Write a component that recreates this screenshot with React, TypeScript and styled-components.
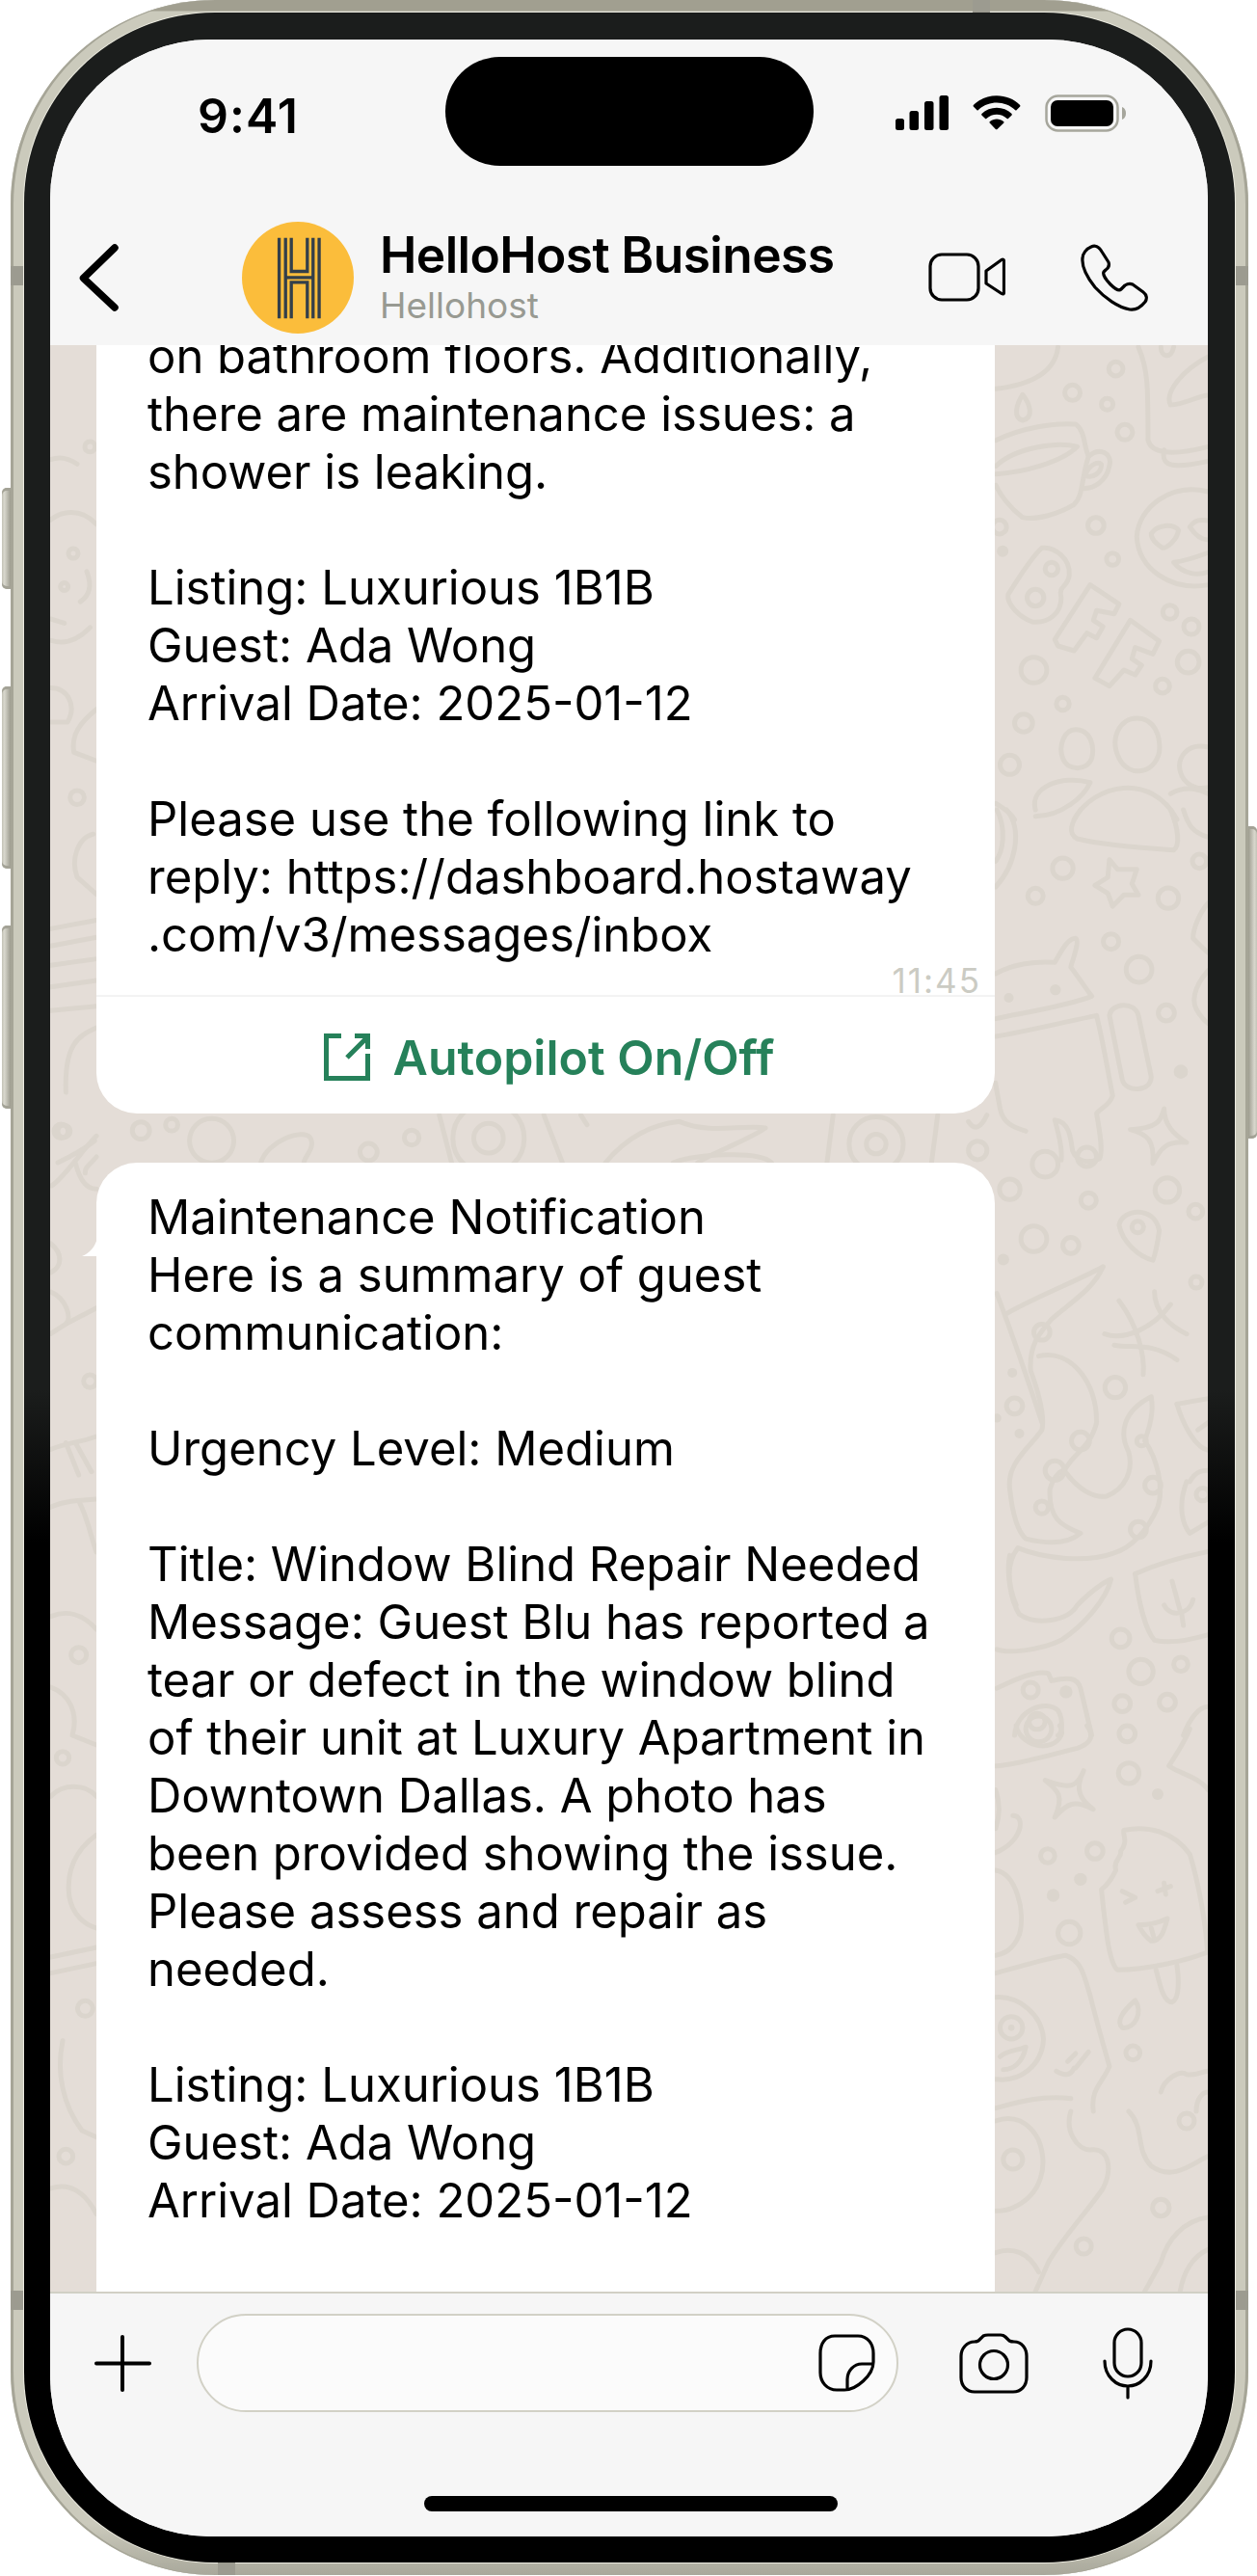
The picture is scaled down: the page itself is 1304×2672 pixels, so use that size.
import React from "react";
import styled, { createGlobalStyle } from "styled-components";

const Global = createGlobalStyle`
  html, body { margin: 0; padding: 0; background: #fff; }
  body { font-family: Inter, "Liberation Sans", sans-serif; }
`;

const Page = styled.div`
  width: 1304px;
  height: 2672px;
  padding-left: 11px;
  box-sizing: border-box;
  overflow: hidden;
`;

const Frame = styled.div`
  position: relative;
  width: 1284px;
  height: 2671px;
  box-sizing: border-box;
  padding: 13px 14px;
  border-radius: 212px;
  background: linear-gradient(#a19f90 0, #a19f90 11px, #cbcabc 12px, #cbcabc 98%, #a9a89b 100%);
  box-shadow: inset 3px 0 0 #a6a597, inset -3px 0 0 #a6a597;
`;

const SideButton = styled.div<{ $top: number; $height: number; $right?: boolean }>`
  position: absolute;
  top: ${(p) => p.$top}px;
  height: ${(p) => p.$height}px;
  width: 9px;
  ${(p) => (p.$right ? "right: -9px;" : "left: -9px;")}
  border-radius: ${(p) => (p.$right ? "0 5px 5px 0" : "5px 0 0 5px")};
  background: ${(p) =>
    p.$right
      ? "linear-gradient(90deg, #9d9c8f, #d8d7cd 70%, #c4c3b7)"
      : "linear-gradient(90deg, #c4c3b7, #d8d7cd 30%, #9d9c8f)"};
  box-shadow: inset 0 3px 0 #a3a296, inset 0 -3px 0 #a3a296;
`;

const AntennaBand = styled.div<{ $side: "left" | "right" | "top" | "bottom"; $at: number }>`
  position: absolute;
  background: #9c9b90;
  ${(p) =>
    p.$side === "left" || p.$side === "right"
      ? `top: ${p.$at}px; height: 20px; width: 13px; ${p.$side}: 0;`
      : `left: ${p.$at}px; width: 18px; height: 13px; ${p.$side}: 0;`}
`;

const Bezel = styled.div`
  height: 100%;
  box-sizing: border-box;
  padding: 28px 28px 27px 27px;
  border-radius: 198px;
  background: linear-gradient(#1b1d1c 0, #1b1d1c 54%, #000 60%);
  box-shadow: 0 0 0 1px #ecebe1;
`;

const Screen = styled.div`
  position: relative;
  height: 100%;
  display: flex;
  flex-direction: column;
  overflow: hidden;
  border-radius: 166px;
  background: #f6f6f6;
`;

const Island = styled.div`
  position: absolute;
  top: 18px;
  left: 410px;
  width: 382px;
  height: 113px;
  border-radius: 57px;
  background: #000;
`;

const Header = styled.header`
  height: 317px;
  flex: none;
  box-sizing: border-box;
  background: #f6f6f6;
`;

const StatusBar = styled.div`
  display: flex;
  align-items: center;
  justify-content: space-between;
  height: 40px;
  margin-top: 56px;
  padding: 0 85px 0 153px;
`;

const Time = styled.span`
  font-size: 50px;
  font-weight: 600;
  line-height: 40px;
  letter-spacing: 1px;
  color: #000;
  position: relative;
  top: 3px;
`;

const StatusIcons = styled.div`
  display: flex;
  align-items: center;
  gap: 24px;
`;

const NavRow = styled.div`
  display: flex;
  align-items: center;
  height: 116px;
  margin-top: 93px;
  padding-left: 30px;
`;

const Avatar = styled.div`
  width: 116px;
  height: 116px;
  margin-left: 127px;
  flex: none;
  border-radius: 50%;
  background: #fbbd3b;
  display: flex;
  align-items: center;
  justify-content: center;
`;

const TitleBlock = styled.div`
  width: 569px;
  margin-left: 27px;
  margin-top: -2px;
  flex: none;
`;

const Title = styled.div`
  font-size: 51.5px;
  line-height: 60px;
  font-weight: 600;
  color: #000;
  letter-spacing: -0.6px;
  white-space: nowrap;
`;

const Subtitle = styled.div`
  font-size: 37px;
  line-height: 46px;
  color: #989a92;
  white-space: nowrap;
`;

const NavActions = styled.div`
  display: flex;
  align-items: center;
  gap: 77px;
`;

const Chat = styled.main`
  position: relative;
  flex: 1;
  min-height: 0;
  overflow: hidden;
  background: #e4ddd7;
`;

const Wallpaper = styled.svg`
  position: absolute;
  inset: 0;
  width: 100%;
  height: 100%;
  filter: blur(0.7px);
`;

const Thread = styled.div`
  position: relative;
  display: flex;
  flex-direction: column;
  gap: 51px;
  width: 932px;
  margin: -60px 0 0 48px;
`;

const Bubble = styled.article<{ $top: number; $bottom?: number }>`
  position: relative;
  background: #fff;
  border-radius: 42px;
  padding-top: ${(p) => p.$top}px;
  padding-bottom: ${(p) => p.$bottom ?? 0}px;
`;

const Tail = styled.svg`
  position: absolute;
  left: -15px;
  top: 78px;
`;

const MessageText = styled.div`
  padding: 0 40px 0 53px;
  font-size: 49px;
  line-height: 60px;
  color: #000;
  white-space: pre-line;
`;

const Stamp = styled.div`
  height: 32px;
  padding-right: 14px;
  text-align: right;
  font-size: 35px;
  line-height: 34px;
  letter-spacing: 2px;
  color: #cbcbc3;
`;

const ActionButton = styled.div`
  height: 123px;
  border-top: 2px solid #f3f3f3;
  display: flex;
  align-items: center;
  justify-content: center;
  gap: 24px;
  padding: 4px 0 0 7px;
  box-sizing: border-box;
  color: #26815a;
  font-size: 50px;
  font-weight: 600;
`;

const Composer = styled.footer`
  height: 254px;
  flex: none;
  box-sizing: border-box;
  border-top: 2px solid #d1d0c5;
  background: #f6f6f6;
  display: flex;
  flex-direction: column;
  padding-top: 21px;
`;

const ComposerRow = styled.div`
  display: flex;
  align-items: center;
  padding-left: 46px;
`;

const InputPill = styled.div`
  width: 728px;
  height: 102px;
  margin-left: 47px;
  margin-right: 63px;
  box-sizing: border-box;
  border: 2px solid #d2d1c6;
  border-radius: 51px;
  background: #fbfbfb;
  display: flex;
  align-items: center;
  justify-content: flex-end;
  padding-right: 22px;
`;

const MicSlot = styled.div`
  margin-left: 77px;
  display: flex;
`;

const HomeBar = styled.div`
  width: 429px;
  height: 16px;
  margin: 87px auto 0 388px;
  border-radius: 8px;
  background: #000;
`;

type Doodle = {
  ox: number;
  oy: number;
  sx: number;
  sy: number;
  paths: string[];
  rings?: [number, number, number][];
  dots?: [number, number, number][];
};

const doodles: Doodle[] = [
  {
    ox: 1000, oy: 350, sx: 1 / 3, sy: 1 / 3,
    paths: [
      "M97 160 C180 150 280 120 290 30",
      "M180 178 C160 210 150 250 180 258 C215 250 205 210 180 178Z",
      "M97 320 C180 280 280 265 345 270 C375 290 370 340 385 370 C360 450 370 490 340 520 C290 550 220 570 180 560 C140 530 110 490 97 460",
      "M97 425 C180 420 300 390 350 340 C290 325 160 340 97 400",
      "M385 370 C420 340 460 360 450 400 C440 450 400 470 370 470",
      "M375 430 C385 395 415 385 425 395 C425 420 400 440 375 430Z",
      "M240 655 C280 650 330 690 325 740 C320 780 290 770 300 810 C300 860 260 890 210 885 C170 870 130 830 135 800 C160 760 210 680 240 655Z",
      "M390 770 L480 830 L465 860 L410 850 L400 880 L430 900 L410 935 L380 920 L340 975 L290 960 L280 940 Z",
      "M515 880 L605 945 L585 985 L530 965 L520 1000 L550 1020 L530 1050 L495 1035 L450 1085 L405 1060 Z",
      "M757 480 C640 450 540 530 535 620 C540 720 640 790 757 770",
      "M580 610 C600 580 650 580 665 600 C660 630 630 655 615 655 C595 640 580 630 580 610Z",
      "M700 590 C720 560 745 570 757 570 M700 590 C720 620 740 630 757 630",
      "M650 700 C690 695 730 680 757 670 M650 700 C680 740 730 740 757 730",
      "M540 30 C570 100 570 150 570 320 C580 360 640 370 757 340",
      "M620 350 C610 400 640 410 757 385",
      "M640 210 C620 170 680 100 757 60 M640 210 C680 210 730 180 757 180",
      "M610 30 C610 60 640 70 650 30",
      "M345 1220 C390 1220 405 1270 395 1310 C380 1350 320 1350 305 1310 C290 1270 310 1220 345 1220Z",
      "M535 1185 C590 1185 610 1240 605 1290 C590 1360 510 1370 480 1310 C450 1250 480 1185 535 1185Z",
      "M757 1275 C690 1260 660 1310 670 1350 C680 1390 720 1410 757 1400",
      "M220 1470 C200 1400 300 1360 390 1385 C370 1430 300 1490 220 1490",
      "M340 1500 C400 1390 580 1350 660 1500",
      "M640 1420 C690 1390 740 1410 757 1420",
      "M97 1450 C130 1470 150 1490 155 1500",
    ],
    rings: [[335,172,24],[443,208,18],[470,98,22],[498,295,24],[408,585,25],[460,690,19],[270,720,20],[220,810,26],[638,855,22],[705,900,24],[695,1010,34],[615,1085,22],[215,1035,40],[305,1140,20],[183,1200,28],[140,1330,30],[108,590,22]],
    dots: [[118,665,18]],
  },
  {
    ox: 1030, oy: 840, sx: 1 / 3, sy: 1 / 3,
    paths: [
      "M40 0 C90 60 70 170 6 240",
      "M6 160 C30 130 40 60 10 0",
      "M270 0 C240 40 230 75 260 90 C340 110 480 120 560 125 C580 110 575 60 550 0",
      "M590 0 C605 50 620 70 667 85",
      "M360 155 L385 185 L445 185 L430 230 L450 265 L405 265 L370 300 L355 260 L315 235 L355 210 Z",
      "M6 510 C60 480 130 470 190 475 C210 440 230 400 255 400 C270 410 240 480 240 490 C270 530 290 560 305 580 C230 610 100 630 6 650",
      "M6 705 C100 690 220 660 320 640 C340 720 360 840 370 890 C360 920 330 930 320 945 C330 1000 340 1060 330 1085 C300 1100 260 1100 245 1060 C240 1020 235 970 190 965 C200 1000 215 1050 210 1090",
      "M100 1000 C70 990 30 980 20 930 C15 900 10 880 6 850",
      "M360 640 C365 600 440 595 450 640 L490 830 C490 880 410 880 400 840 Z",
      "M530 930 C520 960 520 990 425 995 C480 1010 500 1030 495 1100 C520 1050 540 1030 600 1035 C560 1010 530 980 530 930Z",
      "M667 290 C640 320 620 370 620 400 C640 420 660 440 667 445",
      "M667 500 C640 530 610 580 630 620 C640 640 660 660 667 665",
    ],
    rings: [[215,182,32],[130,268,24],[365,410,24],[452,497,40],[537,632,25],[543,275,32],[640,160,22]],
    dots: [[47,585,15],[192,560,17],[582,815,22]],
  },
  {
    ox: 1030, oy: 1790, sx: 1 / 3, sy: 1 / 3,
    paths: [
      "M70 0 C80 60 180 90 210 30 C215 20 210 5 205 0",
      "M290 0 C320 40 290 60 260 70 C180 90 60 125 6 125",
      "M280 140 C260 190 240 200 160 170 C200 200 220 220 190 285 C230 240 250 230 310 260 C270 230 250 200 280 140Z",
      "M610 10 C590 60 560 100 545 125 C580 150 640 160 667 200",
      "M60 280 C100 280 90 360 6 395",
      "M6 200 C20 240 20 280 6 320",
      "M6 450 C70 460 100 580 80 650 C60 700 30 710 6 715",
      "M405 325 C480 310 560 330 610 400 C640 500 660 620 665 705 C600 730 480 760 385 760 C360 740 350 650 335 510 C360 490 370 470 380 450 C370 420 400 410 395 390 C420 360 400 340 405 325Z",
      "M505 760 C520 820 530 860 555 860 C580 850 575 780 570 745",
      "M400 515 L440 535 L410 550",
      "M510 515 L550 500 M530 490 L535 525",
      "M450 620 C490 620 520 610 540 600 C530 640 520 670 490 670 C475 660 460 640 450 620Z",
      "M490 630 L500 665",
      "M6 770 C80 750 180 720 225 715 C270 730 280 770 300 840 C320 920 340 990 360 1060 C340 1110 300 1130 310 1200",
      "M6 845 C80 840 150 900 155 975 C150 1060 80 1110 6 1100",
      "M440 855 C400 890 380 920 400 940 C440 945 465 890 440 855Z",
      "M230 1045 L255 1020 M255 1065 L295 1015",
      "M195 1075 C220 1090 240 1090 250 1065",
      "M20 1030 C40 1010 80 1010 100 1000 C90 1050 60 1070 30 1070",
      "M6 1190 C80 1170 150 1150 240 1160",
      "M520 1140 C530 1100 580 1070 600 1085 C630 1090 650 1075 667 1075",
      "M630 1200 C630 1160 650 1140 667 1140",
    ],
    rings: [[140,10,40],[415,25,25],[420,148,32],[168,405,22],[315,390,25],[235,645,35],[433,1018,22],[55,940,35]],
    dots: [[510,213,18],[270,478,20],[185,528,20],[55,940,10]],
  },
  {
    ox: 1000, oy: 1200, sx: 1 / 3, sy: 1 / 2.613,
    paths: [
      "M480 185 C490 140 590 130 605 200 C600 230 590 270 585 280 C540 270 490 230 480 185Z",
      "M480 390 C540 460 560 540 555 590",
      "M590 365 C590 420 640 460 690 480",
      "M435 480 C500 500 590 460 640 400",
      "M465 510 C520 520 580 500 660 550",
      "M430 298 C340 340 220 380 130 425",
      "M430 298 C400 360 320 400 270 440 C230 480 200 510 205 580 C230 640 250 700 240 740 C200 790 130 830 140 900 C150 980 170 1020 190 1035 C260 1050 320 1050 360 1020 C300 1000 260 980 265 900 C280 860 300 850 310 850 C350 900 400 925 440 920 C500 900 525 850 510 800 C480 750 490 690 580 650 C590 700 570 740 560 770 C600 820 620 900 600 950 C570 1010 520 1060 460 1075 C380 1100 250 1090 165 1060 C130 1100 130 1150 160 1215",
      "M100 370 C130 440 180 560 240 720",
      "M230 540 C330 520 410 610 410 720 C390 790 340 800 310 850",
      "M140 1080 C130 1120 140 1200 170 1240 C220 1270 320 1260 350 1215 C400 1170 440 1150 455 1145 C440 1200 370 1270 300 1310 C230 1340 130 1345 100 1335",
      "M530 1130 C620 1095 700 1080 757 1070",
      "M530 1130 C540 1200 560 1280 590 1310 C640 1320 700 1310 757 1295",
      "M645 1150 L670 1230",
      "M620 1215 C640 1250 700 1240 710 1200",
      "M675 1240 L680 1270",
      "M660 670 L757 655",
      "M660 670 C680 730 720 790 757 795",
      "M725 740 L757 720",
      "M690 880 C660 950 680 1000 700 1020 L757 990",
      "M700 880 C720 850 740 850 757 850",
      "M100 1440 C150 1420 220 1390 260 1400 L270 1420 C320 1410 350 1410 360 1440 L395 1568",
      "M155 1568 C160 1500 250 1470 290 1500 C310 1530 300 1568 290 1568",
      "M680 1568 C700 1520 730 1490 757 1490",
    ],
    rings: [[140,88,32],[630,90,38],[385,118,24],[718,148,22],[215,222,40],[330,240,25],[720,340,18],[468,625,32],[155,675,25],[485,1305,28],[548,1395,38],[672,1375,22],[490,1482,25],[630,1478,25],[250,20,40],[380,0,30],[240,475,25],[360,770,28],[280,850,30],[240,950,20],[540,1010,25],[585,890,25],[550,770,15],[538,190,18],[740,915,20],[205,1445,24],[225,1530,25]],
    dots: [[120,278,18],[148,585,15],[170,750,15],[100,708,14],[315,1450,20]],
  },
  {
    ox: 1030, oy: 2190, sx: 1 / 3, sy: 1 / 3,
    paths: [
      "M6 30 C60 10 110 30 140 90 C170 170 150 260 60 300 C40 310 20 310 6 310",
      "M240 0 C220 60 260 120 300 120 C360 110 370 180 340 240 C300 300 210 400 170 470 L130 560",
      "M420 0 C470 50 440 120 490 170 C560 220 620 160 667 140",
      "M667 330 C590 340 540 400 520 470 L470 560",
      "M667 430 C620 450 590 500 580 560",
      "M6 440 C60 420 110 440 140 500",
    ],
    rings: [[60,150,30],[520,300,26],[600,30,24],[280,420,24]],
  },
  {
    ox: 0, oy: 450, sx: 1 / 3, sy: 1 / 2.24,
    paths: [
      "M157 200 C190 180 250 170 300 210",
      "M160 480 C200 490 240 480 280 450",
      "M157 430 L200 440",
      "M250 390 C290 370 280 340 270 320",
      "M157 590 C210 590 240 630 210 670 L157 670",
      "M300 640 C250 670 220 700 230 740 L300 760",
      "M290 930 C240 940 220 990 240 1030 L300 1070",
      "M157 1150 L300 1130", "M157 1190 L300 1170", "M157 1235 L300 1220", "M157 1285 L300 1270", "M157 1340 L300 1330",
      "M300 1380 C240 1400 200 1420 205 1530",
      "M157 60 C190 50 220 60 240 70",
    ],
    rings: [[228,278,15],[200,355,12],[240,845,22],[280,30,16]],
  },
  {
    ox: 45, oy: 1150, sx: 1 / 3, sy: 1 / 3,
    paths: [
      "M165 85 C120 130 60 220 25 240",
      "M100 170 C110 210 130 250 165 250",
      "M165 150 C140 180 130 180 130 200",
      "M23 420 C60 450 60 490 23 510",
      "M23 570 C70 590 90 650 70 670 L165 620",
      "M70 670 L23 700",
      "M23 1060 C70 1040 110 1040 165 1020",
      "M70 1040 L110 1140",
      "M100 1040 L150 1130",
      "M23 1240 C60 1220 110 1220 165 1215",
      "M110 1220 C140 1280 150 1340 165 1380",
    ],
    rings: [[55,70,22],[145,848,20]],
  },
  {
    ox: 45, oy: 1650, sx: 1 / 3, sy: 1 / 3,
    paths: [
      "M23 80 C70 60 120 70 165 120",
      "M23 300 C80 320 110 380 90 450 L165 480",
      "M23 640 C60 600 130 600 165 640",
      "M165 760 C110 800 70 860 80 950 C90 1010 130 1040 165 1050",
      "M23 1140 L165 1110", "M23 1190 L165 1160",
      "M60 1400 C40 1500 60 1600 120 1680 L165 1700",
      "M23 1860 C80 1840 130 1870 165 1940",
    ],
    rings: [[110,200,24],[60,520,20],[130,1300,24],[70,1760,22]],
  },
  {
    ox: 60, oy: 950, sx: 1 / 1.568, sy: 1 / 3,
    paths: [
      "M330 768 C340 700 400 660 410 690 C420 720 400 750 400 768",
      "M620 620 L640 768",
      "M790 620 L820 768",
      "M890 768 C920 700 960 650 1010 640 C1060 680 1110 650 1150 660 C1120 700 1060 740 1040 768",
      "M1250 768 L1260 620",
      "M1430 620 L1420 768",
      "M1510 620 C1500 660 1490 670 1480 640",
      "M60 700 C40 730 20 750 0 768",
      "M850 620 L860 650",
      "M1000 768 C1040 740 1140 730 1160 768",
    ],
    rings: [[135,668,14],[185,650,10],[250,700,36],[575,690,12],[505,735,14],[1495,730,15],[700,692,58],[700,692,24],[1330,710,44],[1330,710,16],[10,670,10]],
  },
];

function WallpaperArt() {
  return (
    <Wallpaper viewBox="52 358 1200 2019" preserveAspectRatio="none" aria-hidden="true">
      {doodles.map((d, i) => (
        <g key={i} fill="none" stroke="#dbd5cd" strokeWidth={5} strokeLinecap="round" strokeLinejoin="round">
          <g transform={`translate(${d.ox} ${d.oy}) scale(${d.sx} ${d.sy})`}>
            {d.paths.map((p, j) => (
              <path key={j} d={p} vectorEffect="non-scaling-stroke" />
            ))}
          </g>
          {d.rings?.map(([x, y, r], j) => (
            <circle key={j} cx={d.ox + x * d.sx} cy={d.oy + y * d.sy} r={r * d.sx} />
          ))}
          {d.dots?.map(([x, y, r], j) => (
            <circle key={j} cx={d.ox + x * d.sx} cy={d.oy + y * d.sy} r={r * d.sx} fill="#dbd5cd" stroke="none" />
          ))}
        </g>
      ))}
    </Wallpaper>
  );
}

const Signal = () => (
  <svg viewBox="928 97 56 36" width={56} height={36} aria-hidden="true">
    <rect x={929} y={121} width={9} height={12} rx={2.5} />
    <rect x={943.5} y={113} width={9.5} height={20} rx={2.5} />
    <rect x={959} y={103} width={9.5} height={30} rx={2.5} />
    <rect x={974.5} y={97} width={9.5} height={36} rx={2.5} />
  </svg>
);

const Wifi = () => (
  <svg viewBox="0 -0.1 17 11.6" width={52} height={36} aria-hidden="true">
    <path d="M8.5 2.3c2.3 0 4.6.9 6.3 2.5.1.1.3.1.4 0l1.2-1.2c.1-.1.1-.3 0-.5C14.3 1 11.5-.1 8.5-.1S2.7 1 .6 3.1c-.1.1-.1.3 0 .5l1.2 1.2c.1.1.3.1.4 0C3.9 3.2 6.2 2.3 8.5 2.3z" />
    <path d="M8.5 6.3c1.3 0 2.5.5 3.5 1.4.1.1.3.1.4 0l1.2-1.2c.1-.1.1-.3 0-.5-1.4-1.3-3.2-2-5.1-2s-3.7.7-5.1 2c-.1.1-.1.3 0 .5l1.2 1.2c.1.1.3.1.4 0 1-.9 2.2-1.4 3.5-1.4z" />
    <path d="M10.9 9.1c.1-.1.1-.3 0-.4-1.4-1.2-3.4-1.2-4.8 0-.1.1-.1.3 0 .4l2.1 2.2c.1.1.3.1.4 0l2.3-2.2z" />
  </svg>
);

const Battery = () => (
  <svg viewBox="1084 97 84 39" width={84} height={39} aria-hidden="true">
    <rect x={1085.5} y={98.5} width={74} height={36} rx={12} fill="none" stroke="#a6a69c" strokeWidth={2.5} />
    <rect x={1090} y={103} width={65} height={27} rx={7} />
    <path d="M1164 110 C1167 111 1168 114 1168 116.5 C1168 119 1167 122 1164 123 Z" fill="#a6a69c" />
  </svg>
);

const Back = () => (
  <svg viewBox="80 251 42 70" width={42} height={70} aria-hidden="true">
    <path d="M117 255 L84.5 286.5 L117 317" fill="none" stroke="#000" strokeWidth={7.5} strokeLinecap="round" strokeLinejoin="round" />
  </svg>
);

const HLogo = () => (
  <svg viewBox="120 55 140 262" width={47} height={87} aria-hidden="true">
    <path
      d="M130 60 V312 M150 60 V312 M168 60 V165 H218 V60 M168 312 V199 H218 V312 M236 60 V312 M255 60 V312 M150 184 H236"
      fill="none"
      stroke="#333f4a"
      strokeWidth={10}
    />
  </svg>
);

const Video = () => (
  <svg viewBox="964 260 80 52" width={80} height={52} aria-hidden="true">
    <rect x={966} y={262} width={50} height={47} rx={12} fill="none" stroke="#000" strokeWidth={3.2} />
    <path d="M1024 279 L1040 267.5 Q1042.5 266.5 1042.5 269 V301 Q1042.5 304 1040 302.5 L1024 292 Z" fill="none" stroke="#000" strokeWidth={3.2} strokeLinejoin="round" />
  </svg>
);

const Call = () => (
  <svg viewBox="1120 246 72 71" width={72} height={71} aria-hidden="true">
    <path
      d="M1132 249 C1136 247 1140 249 1143 254 L1150 265 C1151 268 1150 271 1147 273 L1145 275 C1144 277 1146 282 1152 288 C1157 293 1161 295 1163 293 L1167 289 C1170 287 1173 287 1175 288 L1186 296 C1190 299 1190 303 1188 306 C1184 311 1179 315 1172 314 C1160 312 1146 302 1136 291 C1128 281 1122 271 1123 261 C1123 256 1127 251 1132 249 Z"
      fill="none"
      stroke="#000"
      strokeWidth={3.2}
      strokeLinejoin="round"
    />
  </svg>
);

const ExternalLink = () => (
  <svg viewBox="336 1073 48 49" width={48} height={49} aria-hidden="true">
    <path d="M354 1075.5 H338.5 V1119.5 H381.5 V1094 M360 1098 L381 1077 M368 1075.5 H381.5 V1089" fill="none" stroke="#26815a" strokeWidth={5} />
  </svg>
);

const Plus = () => (
  <svg viewBox="98 2422 59 59" width={59} height={59} aria-hidden="true">
    <path d="M100 2451.5 H155 M127 2424 V2479" stroke="#000" strokeWidth={4} strokeLinecap="round" />
  </svg>
);

const Sticker = () => (
  <svg viewBox="851 2423 59 60" width={59} height={60} aria-hidden="true">
    <path
      d="M868 2425 H892 C902 2425 908 2433 908 2443 V2452 C908 2466 890 2481 878 2481 H870 C860 2481 853 2473 853 2463 V2443 C853 2433 858 2425 868 2425 Z M908 2454 H896 C888 2454 881 2461 881 2470 V2480"
      fill="none"
      stroke="#000"
      strokeWidth={3.2}
    />
  </svg>
);

const Camera = () => (
  <svg viewBox="996 2417 72 63" width={72} height={63} aria-hidden="true">
    <path
      d="M1016 2425 L1021 2420 Q1023 2419 1026 2419 H1039 Q1042 2419 1044 2421 L1048 2425 Q1050 2426 1053 2426 C1061 2426 1066 2433 1066 2441 V2463 C1066 2472 1060 2478 1052 2478 H1012 C1004 2478 998 2472 998 2463 V2441 C998 2433 1004 2426 1012 2426 Q1014 2426 1016 2425 Z"
      fill="none"
      stroke="#000"
      strokeWidth={3.2}
    />
    <circle cx={1032} cy={2450} r={14.5} fill="none" stroke="#000" strokeWidth={3.2} />
  </svg>
);

const Mic = () => (
  <svg viewBox="1144 2415 52 75" width={52} height={75} aria-hidden="true">
    <rect x={1156} y={2417} width={28} height={49} rx={14} fill="none" stroke="#000" strokeWidth={3.2} />
    <path d="M1146 2450 C1146 2466 1158 2476 1170 2476 C1182 2476 1194 2466 1194 2450 M1170 2476 V2488" fill="none" stroke="#000" strokeWidth={3.2} strokeLinecap="round" />
  </svg>
);

const firstMessage = `on bathroom floors. Additionally,
there are maintenance issues: a
shower is leaking.

Listing: Luxurious 1B1B
Guest: Ada Wong
Arrival Date: 2025-01-12

Please use the following link to
reply: https://dashboard.hostaway
.com/v3/messages/inbox`;

const secondMessage = `Maintenance Notification
Here is a summary of guest
communication:

Urgency Level: Medium

Title: Window Blind Repair Needed
Message: Guest Blu has reported a
tear or defect in the window blind
of their unit at Luxury Apartment in
Downtown Dallas. A photo has
been provided showing the issue.
Please assess and repair as
needed.

Listing: Luxurious 1B1B
Guest: Ada Wong
Arrival Date: 2025-01-12`;

export default function App() {
  return (
    <Page>
      <Global />
      <Frame>
        <SideButton $top={506} $height={105} />
        <SideButton $top={712} $height={189} />
        <SideButton $top={960} $height={190} />
        <SideButton $right $top={857} $height={324} />
        <AntennaBand $side="left" $at={276} />
        <AntennaBand $side="left" $at={2376} />
        <AntennaBand $side="right" $at={276} />
        <AntennaBand $side="right" $at={2376} />
        <AntennaBand $side="top" $at={998} />
        <AntennaBand $side="bottom" $at={215} />
        <Bezel>
          <Screen>
            <Header>
              <StatusBar>
                <Time>9:41</Time>
                <StatusIcons>
                  <Signal />
                  <Wifi />
                  <Battery />
                </StatusIcons>
              </StatusBar>
              <NavRow>
                <Back />
                <Avatar>
                  <HLogo />
                </Avatar>
                <TitleBlock>
                  <Title>HelloHost Business</Title>
                  <Subtitle>Hellohost</Subtitle>
                </TitleBlock>
                <NavActions>
                  <Video />
                  <Call />
                </NavActions>
              </NavRow>
            </Header>
            <Chat>
              <WallpaperArt />
              <Thread>
                <Bubble $top={42}>
                  <MessageText>{firstMessage}</MessageText>
                  <Stamp>11:45</Stamp>
                  <ActionButton>
                    <ExternalLink />
                    <span>Autopilot On/Off</span>
                  </ActionButton>
                </Bubble>
                <Bubble $top={27} $bottom={160}>
                  <Tail viewBox="85 1283 16 20" width={16} height={20} aria-hidden="true">
                    <path d="M101 1283 C99 1292 93 1299 85 1302 L101 1302 Z" fill="#fff" />
                  </Tail>
                  <MessageText>{secondMessage}</MessageText>
                </Bubble>
              </Thread>
            </Chat>
            <Composer>
              <ComposerRow>
                <Plus />
                <InputPill>
                  <Sticker />
                </InputPill>
                <Camera />
                <MicSlot>
                  <Mic />
                </MicSlot>
              </ComposerRow>
              <HomeBar />
            </Composer>
            <Island />
          </Screen>
        </Bezel>
      </Frame>
    </Page>
  );
}
